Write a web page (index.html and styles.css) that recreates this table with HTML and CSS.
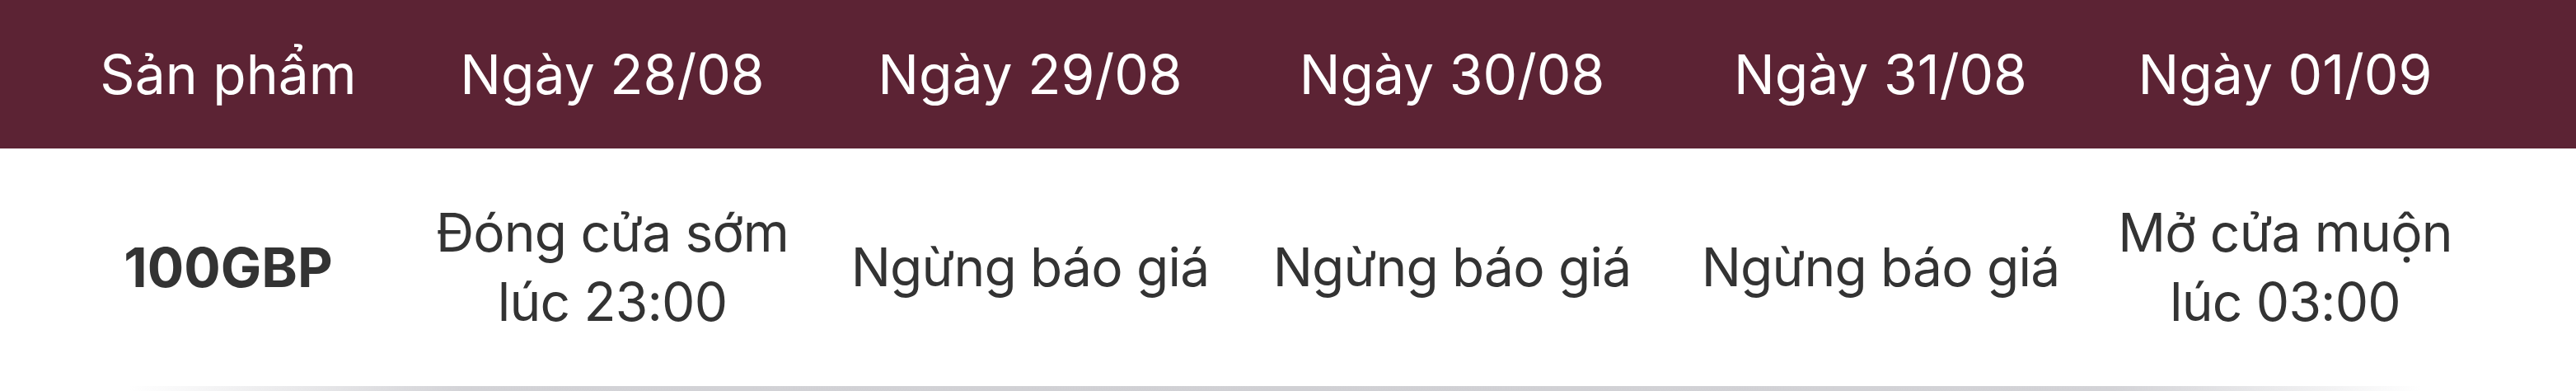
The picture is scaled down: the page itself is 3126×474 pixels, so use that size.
FILE: index.html
```html
<!DOCTYPE html>
<html lang="vi">
<head>
<meta charset="utf-8">
<title>Lịch giao dịch</title>
<link rel="stylesheet" href="styles.css">
</head>
<body>
<div class="schedule">
  <div class="row head">
    <div class="cell">Sản phẩm</div>
    <div class="cell">Ngày 28/08</div>
    <div class="cell">Ngày 29/08</div>
    <div class="cell">Ngày 30/08</div>
    <div class="cell">Ngày 31/08</div>
    <div class="cell">Ngày 01/09</div>
  </div>
  <div class="row body">
    <div class="cell product">100GBP</div>
    <div class="cell">Đóng cửa sớm<br>lúc 23:00</div>
    <div class="cell">Ngừng báo giá</div>
    <div class="cell">Ngừng báo giá</div>
    <div class="cell">Ngừng báo giá</div>
    <div class="cell">Mở cửa muộn<br>lúc 03:00</div>
  </div>
  <div class="shade"></div>
</div>
</body>
</html>
```
FILE: styles.css
```css
* { box-sizing: border-box; }
html, body {
  margin: 0;
  padding: 0;
  background: #ffffff;
}
body {
  font-family: Inter, "Noto Sans", "Liberation Sans", sans-serif;
  font-size: 66px;
  line-height: 84px;
}
.schedule {
  width: 3126px;
}
.row {
  display: grid;
  grid-template-columns: 426px 506px 508px 516px 524px 458px;
  padding-left: 64px;
  align-items: center;
}
.cell {
  text-align: center;
  white-space: nowrap;
}
.head {
  height: 180px;
  background: #5c2334;
  color: #ffffff;
}
.body {
  height: 288px;
  background: #ffffff;
  color: #333333;
  font-size: 64px;
  letter-spacing: -0.8px;
}
.product {
  font-weight: 700;
  font-size: 66px;
  letter-spacing: 0;
}
.shade {
  height: 6px;
  background: linear-gradient(to right, rgba(208,208,212,0) 5%, #d3d3d7 18%, #d0d0d4 50%, #d3d3d7 82%, rgba(208,208,212,0) 94%);
}
```
